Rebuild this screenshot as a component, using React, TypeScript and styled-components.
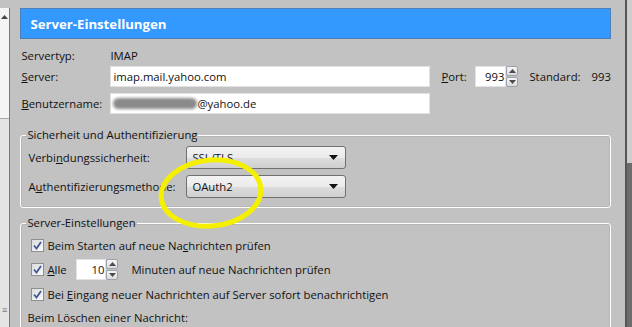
import React from "react";
import styled, { createGlobalStyle } from "styled-components";

const GlobalStyle = createGlobalStyle`
  html, body {
    margin: 0;
    padding: 0;
    background: #c2c2c2;
  }
  body {
    font-family: "Open Sans", "Noto Sans", sans-serif;
    font-size: 11.3px;
    color: #111;
  }
`;

const Window = styled.div`
  position: relative;
  display: flex;
  width: 632px;
  height: 327px;
  overflow: hidden;
  background: #c2c2c2;
`;

/* left tree scrollbar */
const LeftBar = styled.div`
  width: 11px;
  margin-top: 8px;
  display: flex;
  flex-direction: column;
  border-right: 1px solid #7a7a7a;
  background: #f4f4f4;
`;

const LeftArrow = styled.div`
  height: 18px;
  display: flex;
  align-items: center;
  justify-content: center;
`;

const LeftThumb = styled.div`
  margin-top: 92px;
  flex: 1;
  background: #e4e4e4;
  border-top: 1px solid #a8a8a8;
  display: flex;
  align-items: flex-end;
  justify-content: center;
  padding-bottom: 14px;
  color: #777;
  font-size: 9px;
  line-height: 6px;
`;

const Main = styled.div`
  flex: 1;
  padding: 8px 14px 0 10px;
  display: flex;
  flex-direction: column;
`;

const RightBar = styled.div`
  width: 6px;
  border-left: 2px solid #555;
  display: flex;
  flex-direction: column;
`;

const RightTrack = styled.div`
  height: 163px;
  background: #cdcdcd;
`;

const RightThumb = styled.div`
  flex: 1;
  background: #6c6c6c;
`;

const Header = styled.div`
  height: 29px;
  flex: none;
  background: #3399ff;
  border: 1px solid #4d7fb8;
  color: #fff;
  font-weight: 700;
  font-size: 13.2px;
  display: flex;
  align-items: center;
  padding-left: 9px;
`;

const Row = styled.div<{ $top: number; $h?: number }>`
  display: flex;
  align-items: center;
  flex: none;
  margin-top: ${(p) => p.$top}px;
  height: ${(p) => p.$h ?? 21}px;
`;

const Label = styled.span<{ $w?: number }>`
  width: ${(p) => p.$w ?? 89}px;
  flex: none;
  padding-left: 1px;
  white-space: nowrap;
`;

const TextField = styled.div<{ $w: number; $right?: boolean }>`
  width: ${(p) => p.$w}px;
  height: 21px;
  flex: none;
  box-sizing: border-box;
  background: #fff;
  border: 1px solid #e2e2e2;
  display: flex;
  align-items: center;
  justify-content: ${(p) => (p.$right ? "flex-end" : "flex-start")};
  padding: 0 ${(p) => (p.$right ? 1 : 2)}px 0 2px;
  white-space: nowrap;
`;

const Blur = styled.span`
  display: inline-block;
  width: 84px;
  height: 11px;
  background: #8a8a8a;
  border-radius: 6px;
  filter: blur(1.5px);
`;

const Spin = styled.div`
  width: 12px;
  height: 21px;
  flex: none;
  display: flex;
  flex-direction: column;
  gap: 1px;
`;

const SpinBtn = styled.div`
  flex: 1;
  border: 1px solid #9aa2b0;
  border-radius: 2px;
  background: linear-gradient(#f6f6f6, #dcdcdc);
  display: flex;
  align-items: center;
  justify-content: center;
`;

const PortLabel = styled.span`
  margin-left: 11px;
  width: 34px;
  flex: none;
`;

const Standard = styled.span`
  margin-left: 11px;
  word-spacing: 8px;
  white-space: nowrap;
`;

const Group = styled.fieldset<{ $h?: number }>`
  margin: 0;
  padding: 0 0 0 6px;
  border: 1px solid #fff;
  border-radius: 3px;
  box-shadow: inset 0 0 0 1px #b6b6b6;
  min-width: 0;
  flex: none;
  ${(p) => (p.$h ? `height: ${p.$h}px;` : "")}
  box-sizing: border-box;
`;

const Legend = styled.legend`
  padding: 0 1px;
  margin-left: -1px;
  line-height: 14px;
`;

const Select = styled.div`
  width: 160px;
  height: 23px;
  box-sizing: border-box;
  border: 1px solid #707070;
  border-radius: 3px;
  background: linear-gradient(#f3f3f3 0%, #ebebeb 50%, #dddddd 51%, #cfcfcf 100%);
  display: flex;
  align-items: center;
  justify-content: space-between;
  padding: 0 7px 0 5px;
`;

const Check = styled.span`
  width: 13px;
  height: 13px;
  box-sizing: border-box;
  border: 1px solid #8e8f8f;
  background: linear-gradient(135deg, #dcdcdc, #fafafa);
  display: inline-flex;
  align-items: center;
  justify-content: center;
  margin: 0 3px 0 4px;
  flex: none;
`;

const Plain = styled.span<{ $w?: number; $ml?: number }>`
  white-space: nowrap;
  flex: none;
  ${(p) => (p.$w ? `width: ${p.$w}px;` : "")}
  ${(p) => (p.$ml ? `margin-left: ${p.$ml}px;` : "")}
`;

const Spacer = styled.div<{ $h: number }>`
  height: ${(p) => p.$h}px;
  flex: none;
`;

const Ellipse = styled.svg`
  position: absolute;
  left: 150px;
  top: 150px;
  pointer-events: none;
`;

const Tri = ({ up }: { up?: boolean }) => (
  <svg width="7" height="4" viewBox="0 0 7 4">
    <path d={up ? "M0 4 L3.5 0 L7 4 Z" : "M0 0 L7 0 L3.5 4 Z"} fill="#4b4b4b" />
  </svg>
);

const Spinner = () => (
  <Spin>
    <SpinBtn>
      <Tri up />
    </SpinBtn>
    <SpinBtn>
      <Tri />
    </SpinBtn>
  </Spin>
);

const CheckBox = () => (
  <Check>
    <svg width="9" height="9" viewBox="0 0 9 9">
      <path d="M1 4.5 L3.5 7.5 L8 1" fill="none" stroke="#3c5a98" strokeWidth="1.8" />
    </svg>
  </Check>
);

const Arrow = () => (
  <svg width="9" height="5" viewBox="0 0 9 5">
    <path d="M0 0 H9 L4.5 5 Z" fill="#111" />
  </svg>
);

export default function App() {
  return (
    <Window>
      <GlobalStyle />
      <LeftBar>
        <LeftArrow>
          <svg width="7" height="4" viewBox="0 0 7 4">
            <path d="M0 4 L3.5 0 L7 4 Z" fill="#444" />
          </svg>
        </LeftArrow>
        <LeftThumb>≡</LeftThumb>
      </LeftBar>
      <Main>
        <Header>Server-Einstellungen</Header>
        <Row $top={7} $h={18}>
          <Label>Servertyp:</Label>
          <Plain>IMAP</Plain>
        </Row>
        <Row $top={2}>
          <Label>
            <u>S</u>erver:
          </Label>
          <TextField $w={320}>imap.mail.yahoo.com</TextField>
          <PortLabel>
            <u>P</u>ort:
          </PortLabel>
          <TextField $w={31} $right>
            993
          </TextField>
          <Spinner />
          <Standard>Standard: 993</Standard>
        </Row>
        <Row $top={6}>
          <Label>
            <u>B</u>enutzername:
          </Label>
          <TextField $w={320}>
            <Blur />
            @yahoo.de
          </TextField>
        </Row>
        <Spacer $h={14} />
        <Group $h={80}>
          <Legend>Sicherheit und Authentifizierung</Legend>
          <Row $top={4} $h={23}>
            <Label $w={158}>
              Verbi<u>n</u>dungssicherheit:
            </Label>
            <Select>
              <span>SSL/TLS</span>
              <Arrow />
            </Select>
          </Row>
          <Row $top={6} $h={23}>
            <Label $w={158}>
              A<u>u</u>thentifizierungsmethode:
            </Label>
            <Select>
              <span>OAuth2</span>
              <Arrow />
            </Select>
          </Row>
        </Group>
        <Spacer $h={8} />
        <Group>
          <Legend>Server-Einstellungen</Legend>
          <Row $top={5} $h={20}>
            <CheckBox />
            <Plain>
              Beim Starten auf neue Na<u>c</u>hrichten prüfen
            </Plain>
          </Row>
          <Row $top={4}>
            <CheckBox />
            <Plain $w={29}>
              <u>A</u>lle
            </Plain>
            <TextField $w={30} $right>
              10
            </TextField>
            <Spinner />
            <Plain $ml={13}>Minuten auf neue Nachrichten prüfen</Plain>
          </Row>
          <Row $top={4}>
            <CheckBox />
            <Plain>
              Bei <u>E</u>ingang neuer Nachrichten auf Server sofort benachrichtigen
            </Plain>
          </Row>
          <Row $top={2}>
            <Plain>Beim Löschen einer Nachricht:</Plain>
          </Row>
        </Group>
      </Main>
      <RightBar>
        <RightTrack />
        <RightThumb />
      </RightBar>
      <Ellipse width="130" height="90" viewBox="0 0 130 90">
        <ellipse
          cx="61"
          cy="43"
          rx="50"
          ry="33"
          fill="none"
          stroke="#f4f000"
          strokeWidth="5"
          transform="rotate(-6 61 43)"
        />
      </Ellipse>
    </Window>
  );
}
